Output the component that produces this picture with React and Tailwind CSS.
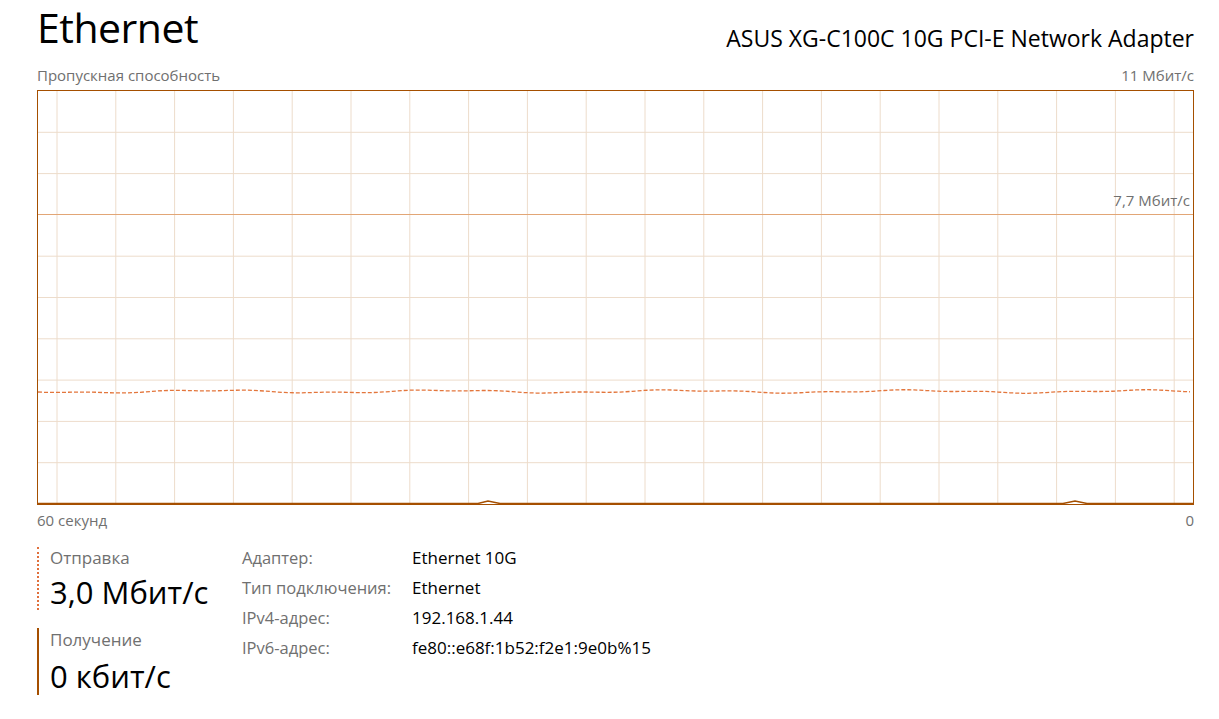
import React from "react";

const W = 1155;
const H = 413;

const rowH = H / 10;
const colStep = 58.8;

function sendPath() {
  const pts = [];
  for (let x = 0; x <= W; x += 6) {
    const y = 300.5 + Math.sin(x / 37) * 1.2 + Math.sin(x / 13 + 1) * 0.6;
    pts.push(`${x},${y.toFixed(2)}`);
  }
  return "M" + pts.join(" L");
}

function Chart() {
  const hLines = [];
  for (let i = 1; i < 10; i++) hLines.push(i * rowH);
  const vLines = [];
  for (let i = 0; i < 20; i++) vLines.push(19 + i * colStep);

  return (
    <svg width={W} height={H} className="block">
      {vLines.map((x) => (
        <line key={"v" + x} x1={x} y1={0} x2={x} y2={H} stroke="#eddccb" strokeWidth="1" />
      ))}
      {hLines.map((y, i) =>
        i === 2 ? null : (
          <line key={"h" + i} x1={0} y1={y} x2={W} y2={y} stroke="#eddccb" strokeWidth="1" />
        )
      )}
      <line x1={0} y1={123.5} x2={W} y2={123.5} stroke="#e2a676" strokeWidth="1.2" />
      <path d={sendPath()} fill="none" stroke="#e3763c" strokeWidth="1.3" strokeDasharray="4 2" />
      <polyline
        points={`0,${H - 0.5} 440,${H - 0.5} 450,${H - 3} 462,${H - 0.5} 1025,${H - 0.5} 1037,${H - 3} 1049,${H - 0.5} ${W},${H - 0.5}`}
        fill="none"
        stroke="#a54f00"
        strokeWidth="1.5"
      />
    </svg>
  );
}

export default function App() {
  const font = { fontFamily: '"Open Sans", "Noto Sans", sans-serif' };
  return (
    <div className="w-[1219px] h-[719px] bg-white pl-[37px] pr-[25px] overflow-hidden" style={font}>
      {/* Header */}
      <div className="flex items-end justify-between h-[52px]">
        <div className="text-[41px] leading-none text-black tracking-[-0.5px] pb-[4px]">Ethernet</div>
        <div className="text-[23px] leading-none text-black pb-[2px]">
          ASUS XG-C100C 10G PCI-E Network Adapter
        </div>
      </div>

      {/* Graph labels */}
      <div className="flex justify-between text-[15px] text-[#707070] mt-[13px] leading-[20px]">
        <span>Пропускная способность</span>
        <span>11 Мбит/с</span>
      </div>

      {/* Graph */}
      <div className="relative border border-[#a54f00] w-[1157px] h-[415px] mt-[5px]">
        <Chart />
        <span className="absolute right-[3px] top-[102px] text-[15px] text-[#707070] leading-none">
          7,7 Мбит/с
        </span>
      </div>

      <div className="flex justify-between text-[15px] text-[#707070] leading-[20px] mt-[5px]">
        <span>60 секунд</span>
        <span>0</span>
      </div>

      {/* Stats */}
      <div className="flex mt-[17px]">
        <div className="w-[205px] shrink-0">
          <div className="border-l-2 border-dotted border-[#e0703c] pl-[11px] h-[63px]">
            <div className="text-[17px] text-[#707070] leading-[22px]">Отправка</div>
            <div className="text-[31px] text-black leading-[36px] mt-[5px]">3,0 Мбит/с</div>
          </div>
          <div className="border-l-2 border-[#a54f00] pl-[11px] mt-[18px] h-[67px]">
            <div className="text-[17px] text-[#707070] leading-[24px]">Получение</div>
            <div className="text-[31px] text-black leading-[36px] mt-[6px]">0 кбит/с</div>
          </div>
        </div>
        <div className="w-[170px] shrink-0 text-[16.5px] text-[#707070] leading-[30px] -mt-[4px]">
          <div>Адаптер:</div>
          <div>Тип подключения:</div>
          <div>IPv4-адрес:</div>
          <div>IPv6-адрес:</div>
        </div>
        <div className="text-[17px] text-black leading-[30px] -mt-[4px]">
          <div>Ethernet 10G</div>
          <div>Ethernet</div>
          <div>192.168.1.44</div>
          <div>fe80::e68f:1b52:f2e1:9e0b%15</div>
        </div>
      </div>
    </div>
  );
}
